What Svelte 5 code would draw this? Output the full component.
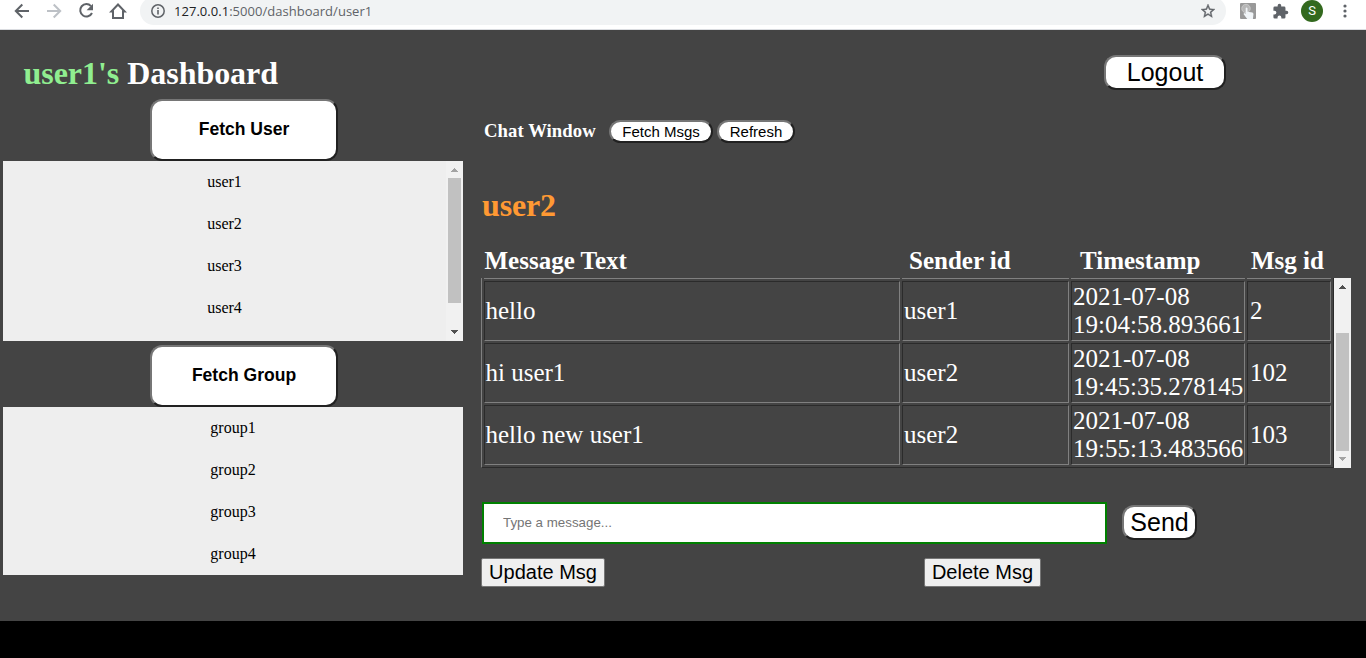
<script>
  const users = ['user1', 'user2', 'user3', 'user4'];
  const groups = ['group1', 'group2', 'group3', 'group4'];
  const messages = [
    { text: 'hello', sender: 'user1', date: '2021-07-08', time: '19:04:58.893661', id: '2' },
    { text: 'hi user1', sender: 'user2', date: '2021-07-08', time: '19:45:35.278145', id: '102' },
    { text: 'hello new user1', sender: 'user2', date: '2021-07-08', time: '19:55:13.483566', id: '103' }
  ];
</script>

<div class="screen">
  <header class="browser">
    <nav>
      <svg width="16" height="16" viewBox="0 0 16 16" fill="none" stroke="#5f6368" stroke-width="2"><path d="M15 8H2.5M8.3 1.5 1.8 8l6.5 6.5" /></svg>
      <svg width="16" height="16" viewBox="0 0 16 16" fill="none" stroke="#bdc1c6" stroke-width="2"><path d="M1 8h12.5M7.7 1.5 14.2 8l-6.5 6.5" /></svg>
      <svg width="16" height="16" viewBox="0 0 16 16"><path d="M13 3.1A6.2 6.2 0 1 0 14 10" fill="none" stroke="#5f6368" stroke-width="2" /><path d="M15 .8v6.4H8.6z" fill="#5f6368" /></svg>
      <svg width="18" height="18" viewBox="0 0 18 18" fill="none" stroke="#5f6368" stroke-width="2"><path d="M2.300 9.500H4V16h10V9.500h1.700L9 2.500z" /></svg>
    </nav>
    <div class="omnibox">
      <svg width="16" height="16" viewBox="0 0 16 16"><circle cx="8" cy="8" r="6.200" fill="none" stroke="#5f6368" stroke-width="1.500" /><path d="M7.200 7h1.600v4.500H7.200zM7.200 4.400h1.600V6H7.200z" fill="#5f6368" /></svg>
      <span class="url"><b>127.0.0.1</b>:5000/dashboard/user1</span>
      <svg width="16" height="16" viewBox="0 0 24 24"><path fill="#5f6368" stroke="#5f6368" stroke-width=".6" d="M22.500 9.240l-7.500-.65L12 1.500 9 8.600l-7.500.64 5.700 4.940L5.500 21.600 12 17.670l6.500 3.930-1.700-7.420 5.700-4.940zM12 15.700l-4.100 2.480 1.090-4.660L5.370 10.380l4.770-.41L12 5.600l1.870 4.380 4.770.41-3.620 3.140 1.090 4.660z" /></svg>
    </div>
    <div class="tools">
      <svg width="16" height="16" viewBox="0 0 16 16"><rect width="16" height="16" rx="1" fill="#999" /><circle cx="6" cy="5.500" r="4.200" fill="#b7b7b7" stroke="#c9c9c9" /><path fill="#f1f5f8" d="M5.700 5q1-1 1.800.2v3.500l5 .8 1 1.200-.6 5.300H7.200L3.500 11l.7-1 1.500.8z" /></svg>
      <svg width="17" height="17" viewBox="0 0 24 24"><path fill="#5f6368" d="M20.500 11H19V7a2 2 0 0 0-2-2h-4V3.500a2.500 2.500 0 0 0-5 0V5H4a2 2 0 0 0-2 2v3.800h1.500a2.700 2.700 0 0 1 0 5.400H2V20a2 2 0 0 0 2 2h3.800v-1.500a2.700 2.700 0 0 1 5.400 0V22H17a2 2 0 0 0 2-2v-4h1.500a2.500 2.500 0 0 0 0-5z" /></svg>
      <span class="avatar">S</span>
      <svg width="4" height="16" viewBox="0 0 4 16" fill="#5f6368"><circle cx="2" cy="3" r="1.600" /><circle cx="2" cy="8" r="1.600" /><circle cx="2" cy="13" r="1.600" /></svg>
    </div>
  </header>

  <div class="title">
    <h1><span>user1's</span> Dashboard</h1>
    <button class="raised logout">Logout</button>
  </div>

  <main>
    <aside>
      <button class="raised fetch">Fetch User</button>
      <div class="list users">
        <ul>
          {#each users as user}<li>{user}</li>{/each}
        </ul>
        <div class="bar">
          <svg width="17" height="17" viewBox="0 0 17 17" shape-rendering="crispEdges"><path d="M5 11h7L8.500 7z" fill="#a3a3a3" /></svg>
          <i style="height:125px"></i>
          <svg class="end" width="17" height="17" viewBox="0 0 17 17" shape-rendering="crispEdges"><path d="M5 6h7l-3.500 4z" fill="#505050" /></svg>
        </div>
      </div>
      <button class="raised fetch">Fetch Group</button>
      <div class="list">
        <ul>
          {#each groups as group}<li>{group}</li>{/each}
        </ul>
      </div>
    </aside>

    <section>
      <div class="chat-head">
        <h3>Chat Window</h3>
        <button class="raised pill msgs">Fetch Msgs</button>
        <button class="raised pill refresh">Refresh</button>
      </div>
      <h2>user2</h2>
      <div class="columns"><span>Message Text</span><span>Sender id</span><span>Timestamp</span><span>Msg id</span></div>
      <div class="scroller">
        <div class="table">
          <div class="edge"></div><div class="edge"></div><div class="edge"></div><div class="edge"></div>
          {#each messages as m}
            <div class="cell">{m.text}</div>
            <div class="cell">{m.sender}</div>
            <div class="cell">{m.date}<br />{m.time}</div>
            <div class="cell id">{m.id}</div>
          {/each}
        </div>
        <div class="bar">
          <svg width="17" height="17" viewBox="0 0 17 17" shape-rendering="crispEdges"><path d="M5 11h7L8.500 7z" fill="#505050" /></svg>
          <i class="low" style="height:118px"></i>
          <svg class="end" width="17" height="17" viewBox="0 0 17 17" shape-rendering="crispEdges"><path d="M5 6h7l-3.500 4z" fill="#a3a3a3" /></svg>
        </div>
      </div>
      <div class="compose">
        <input placeholder="Type a message..." />
        <button class="raised send">Send</button>
      </div>
      <div class="actions">
        <button class="plain update">Update Msg</button>
        <button class="plain delete">Delete Msg</button>
      </div>
    </section>
  </main>
  <footer></footer>
</div>

<style>
  :global(body) { margin: 0; background: #444; }
  .screen {
    width: 1366px; height: 658px; overflow: hidden; background: #444; color: #fff;
    display: flex; flex-direction: column;
    font-family: "Liberation Serif", "Times New Roman", serif;
  }
  svg { display: block; flex: none; }
  .screen * { box-sizing: border-box; }
  h1, h2, h3, ul { margin: 0; padding: 0; list-style: none; }

  .browser { height: 30px; flex: none; background: #fff; border-bottom: 1px solid #dadce0; display: flex; overflow: hidden; }
  nav { width: 140px; height: 22px; padding-left: 14px; display: flex; align-items: center; gap: 16px; flex: none; }
  nav svg:last-child { margin-left: -1px; }
  .omnibox { width: 1086px; height: 28px; margin-top: -3px; border-radius: 14px; background: #f1f3f4; display: flex; align-items: center; padding: 0 10px; flex: none; }
  .url { flex: 1; margin-left: 8px; font: 13px/20px "Open Sans", sans-serif; color: #5f6368; letter-spacing: 0.03px; }
  .url b { font-weight: 400; color: #202124; }
  .tools { height: 22px; display: flex; align-items: center; padding-left: 14px; }
  .tools svg:nth-child(2) { margin-left: 16px; }
  .avatar { width: 22px; height: 22px; margin: 0 20px 0 12px; border-radius: 50%; background: #33691e; font: 13px/22px Roboto, sans-serif; text-align: center; }

  .title { height: 69px; flex: none; display: flex; align-items: flex-start; justify-content: space-between; padding: 25px 140px 0 23.5px; }
  h1 { font-size: 32px; line-height: 36px; letter-spacing: -0.04px; }
  h1 span { color: #90ee90; }

  button { font-family: "Liberation Sans", Arial, sans-serif; color: #000; padding: 0; margin: 0; display: block; flex: none; }
  .raised { background: #fff; border: 2px solid; border-color: #767676 #212121 #212121 #767676; border-radius: 12px; }
  .logout { width: 122px; height: 35px; font-size: 25px; line-height: 31px; }

  main { height: 522px; display: flex; flex: none; }
  aside { width: 481px; padding-left: 3px; flex: none; }
  .fetch { width: 188px; height: 62px; margin-left: 147px; font-size: 17.550px; font-weight: 700; padding-bottom: 1px; }
  .list { width: 460px; height: 168px; background: #eee; color: #000; display: flex; }
  .users { height: 180px; margin-bottom: 4px; overflow: hidden; }
  ul { flex: 1; }
  li { height: 42px; text-align: center; font-size: 16px; line-height: 42px; }
  .bar { width: 17px; background: #f1f1f1; display: flex; flex-direction: column; align-items: center; flex: none; }
  .bar i { width: 13px; background: #c1c1c1; flex: none; }
  .bar .low { margin-top: 38px; }
  .end { margin-top: auto; }

  section { width: 885px; }
  .chat-head { display: flex; height: 44px; padding: 21px 0 0 3px; }
  h3 { width: 125px; font-size: 18.720px; line-height: 22px; letter-spacing: 0.06px; }
  .pill { height: 23px; font-size: 15px; line-height: 19px; }
  .msgs { width: 104px; margin-right: 4px; }
  .refresh { width: 78px; }
  h2 { font-size: 32px; line-height: 36px; color: #ff9933; margin-top: 44px; padding-left: 1px; letter-spacing: -0.15px; }
  .columns { display: grid; grid-template-columns: 424px 171px 171px 90px; padding: 21px 0 0 4px; height: 55px; font-weight: 700; font-size: 25px; line-height: 34px; }
  .columns span:first-child { margin-left: -0.5px; }
  .scroller { display: flex; height: 190px; width: 870px; }
  .table { width: 853px; display: grid; grid-template-columns: 416px 167px 174px 84px; grid-template-rows: 1px 60px 60px 60px; gap: 2px; padding: 0 2px; border: 1px solid; border-color: #808080 #2b2b2b #2b2b2b #808080; border-top: 0; }
  .edge { background: #808080; }
  .cell { border: 1px solid; border-color: #2b2b2b #808080 #808080 #2b2b2b; padding: 1px; font-size: 25px; line-height: 28px; display: block; align-content: center; white-space: nowrap; }
  .cell:nth-child(4n + 1) { padding-left: 0.5px; }
  .id { padding-left: 2px; }
  .compose { display: flex; margin-top: 34px; height: 56px; }
  input { width: 625px; height: 42px; margin-left: 1px; border: 2px solid #008000; border-radius: 0; background: #fff; padding: 0 19px 2px; font: 13.333px "Liberation Sans", Arial, sans-serif; outline: none; }
  input::placeholder { color: #757575; opacity: 1; }
  .send { width: 75px; height: 35px; margin: 3px 0 0 15px; font-size: 25px; line-height: 31px; }
  .actions { display: flex; }
  .plain { height: 29px; border: 1px solid #767676; border-radius: 2px; background: #efefef; font-size: 20px; line-height: 27px; }
  .update { width: 124px; margin-right: 319px; }
  .delete { width: 117px; }
  footer { flex: 1; background: #000; }
</style>
